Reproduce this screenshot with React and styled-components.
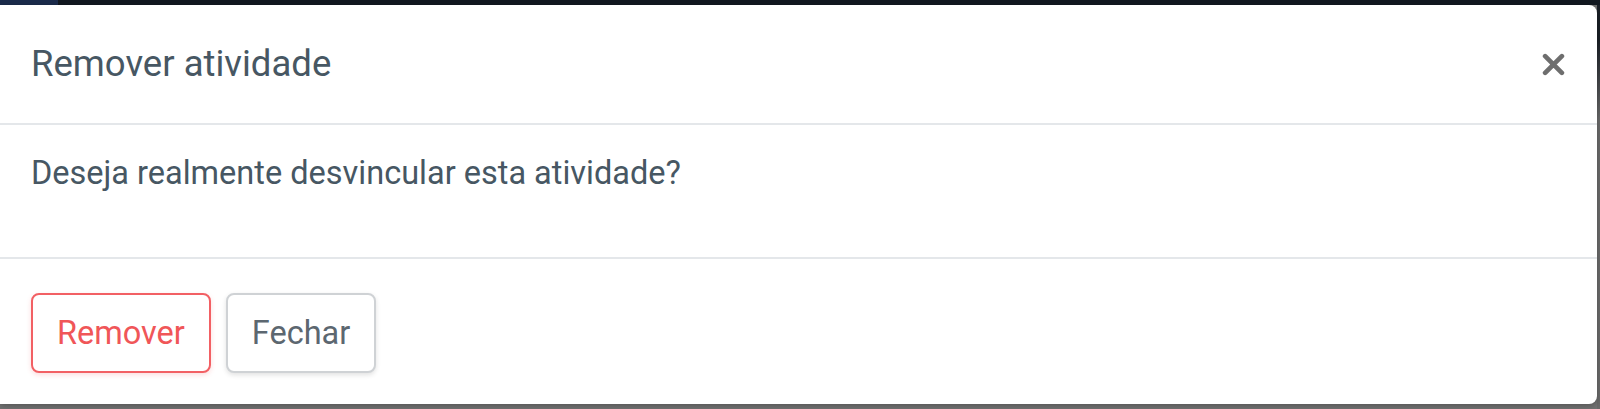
import React from 'react';
import styled, {createGlobalStyle} from 'styled-components';

const GlobalStyle = createGlobalStyle`
  html, body {
    margin: 0;
    padding: 0;
  }
  body {
    font-family: Roboto, "Liberation Sans", sans-serif;
    background: #6f6f6f;
  }
`;

const Backdrop = styled.div`
  width: 1600px;
  height: 409px;
  box-sizing: border-box;
  padding: 5px 3px 5px 0;
  background:
    linear-gradient(to right, #1b2b4b 0 58px, #121820 58px) top / 100% 5px no-repeat,
    linear-gradient(to bottom, #1a1f26 0 40px, #6a6a6a 120px) right / 3px 100% no-repeat,
    #727272;
`;

const Modal = styled.div`
  height: 100%;
  display: flex;
  flex-direction: column;
  background: #ffffff;
  border-radius: 0 8px 8px 0;
  box-shadow: 0 2px 6px rgba(0, 0, 0, 0.25);
`;

const Header = styled.div`
  height: 118px;
  flex-shrink: 0;
  display: flex;
  align-items: center;
  justify-content: space-between;
  padding: 0 22px 0 31px;
  border-bottom: 2px solid #e4e7ea;
`;

const Title = styled.h5`
  margin: 0;
  font-size: 36.5px;
  font-weight: 400;
  line-height: 1.5;
  color: #475763;
`;

const CloseButton = styled.button`
  width: 44px;
  height: 44px;
  display: flex;
  align-items: center;
  justify-content: center;
  padding: 0;
  border: none;
  background: transparent;
  cursor: pointer;
`;

const Body = styled.div`
  height: 134px;
  flex-shrink: 0;
  box-sizing: border-box;
  padding: 24px 31px 0;
  border-bottom: 2px solid #e4e7ea;
`;

const Message = styled.p`
  margin: 0;
  font-size: 32.5px;
  line-height: 49px;
  color: #475763;
`;

const Footer = styled.div`
  flex: 1;
  display: flex;
  align-items: center;
  gap: 15px;
  padding: 2px 31px 0;
`;

const Button = styled.button`
  height: 80px;
  padding: 0 24px;
  font-family: Roboto, "Liberation Sans", sans-serif;
  font-size: 32.5px;
  background: #ffffff;
  border-radius: 8px;
  cursor: pointer;
  color: ${(props) => (props.danger ? '#f05658' : '#5c6770')};
  border: 2px solid ${(props) => (props.danger ? '#f26064' : '#cfd2d5')};
  box-shadow: 0 2px 5px ${(props) => (props.danger ? 'rgba(240, 85, 90, 0.2)' : 'rgba(0, 0, 0, 0.12)')};
`;

function App() {
  return (
    <>
      <GlobalStyle />
      <Backdrop>
        <Modal>
          <Header>
            <Title>Remover atividade</Title>
            <CloseButton aria-label="Fechar">
              <svg width="23" height="23" viewBox="0 0 22 22">
                <path d="M3 3L19 19M19 3L3 19" stroke="#6e6e6e" strokeWidth="4.5" strokeLinecap="round" />
              </svg>
            </CloseButton>
          </Header>
          <Body>
            <Message>Deseja realmente desvincular esta atividade?</Message>
          </Body>
          <Footer>
            <Button danger>Remover</Button>
            <Button>Fechar</Button>
          </Footer>
        </Modal>
      </Backdrop>
    </>
  );
}

export default App;
